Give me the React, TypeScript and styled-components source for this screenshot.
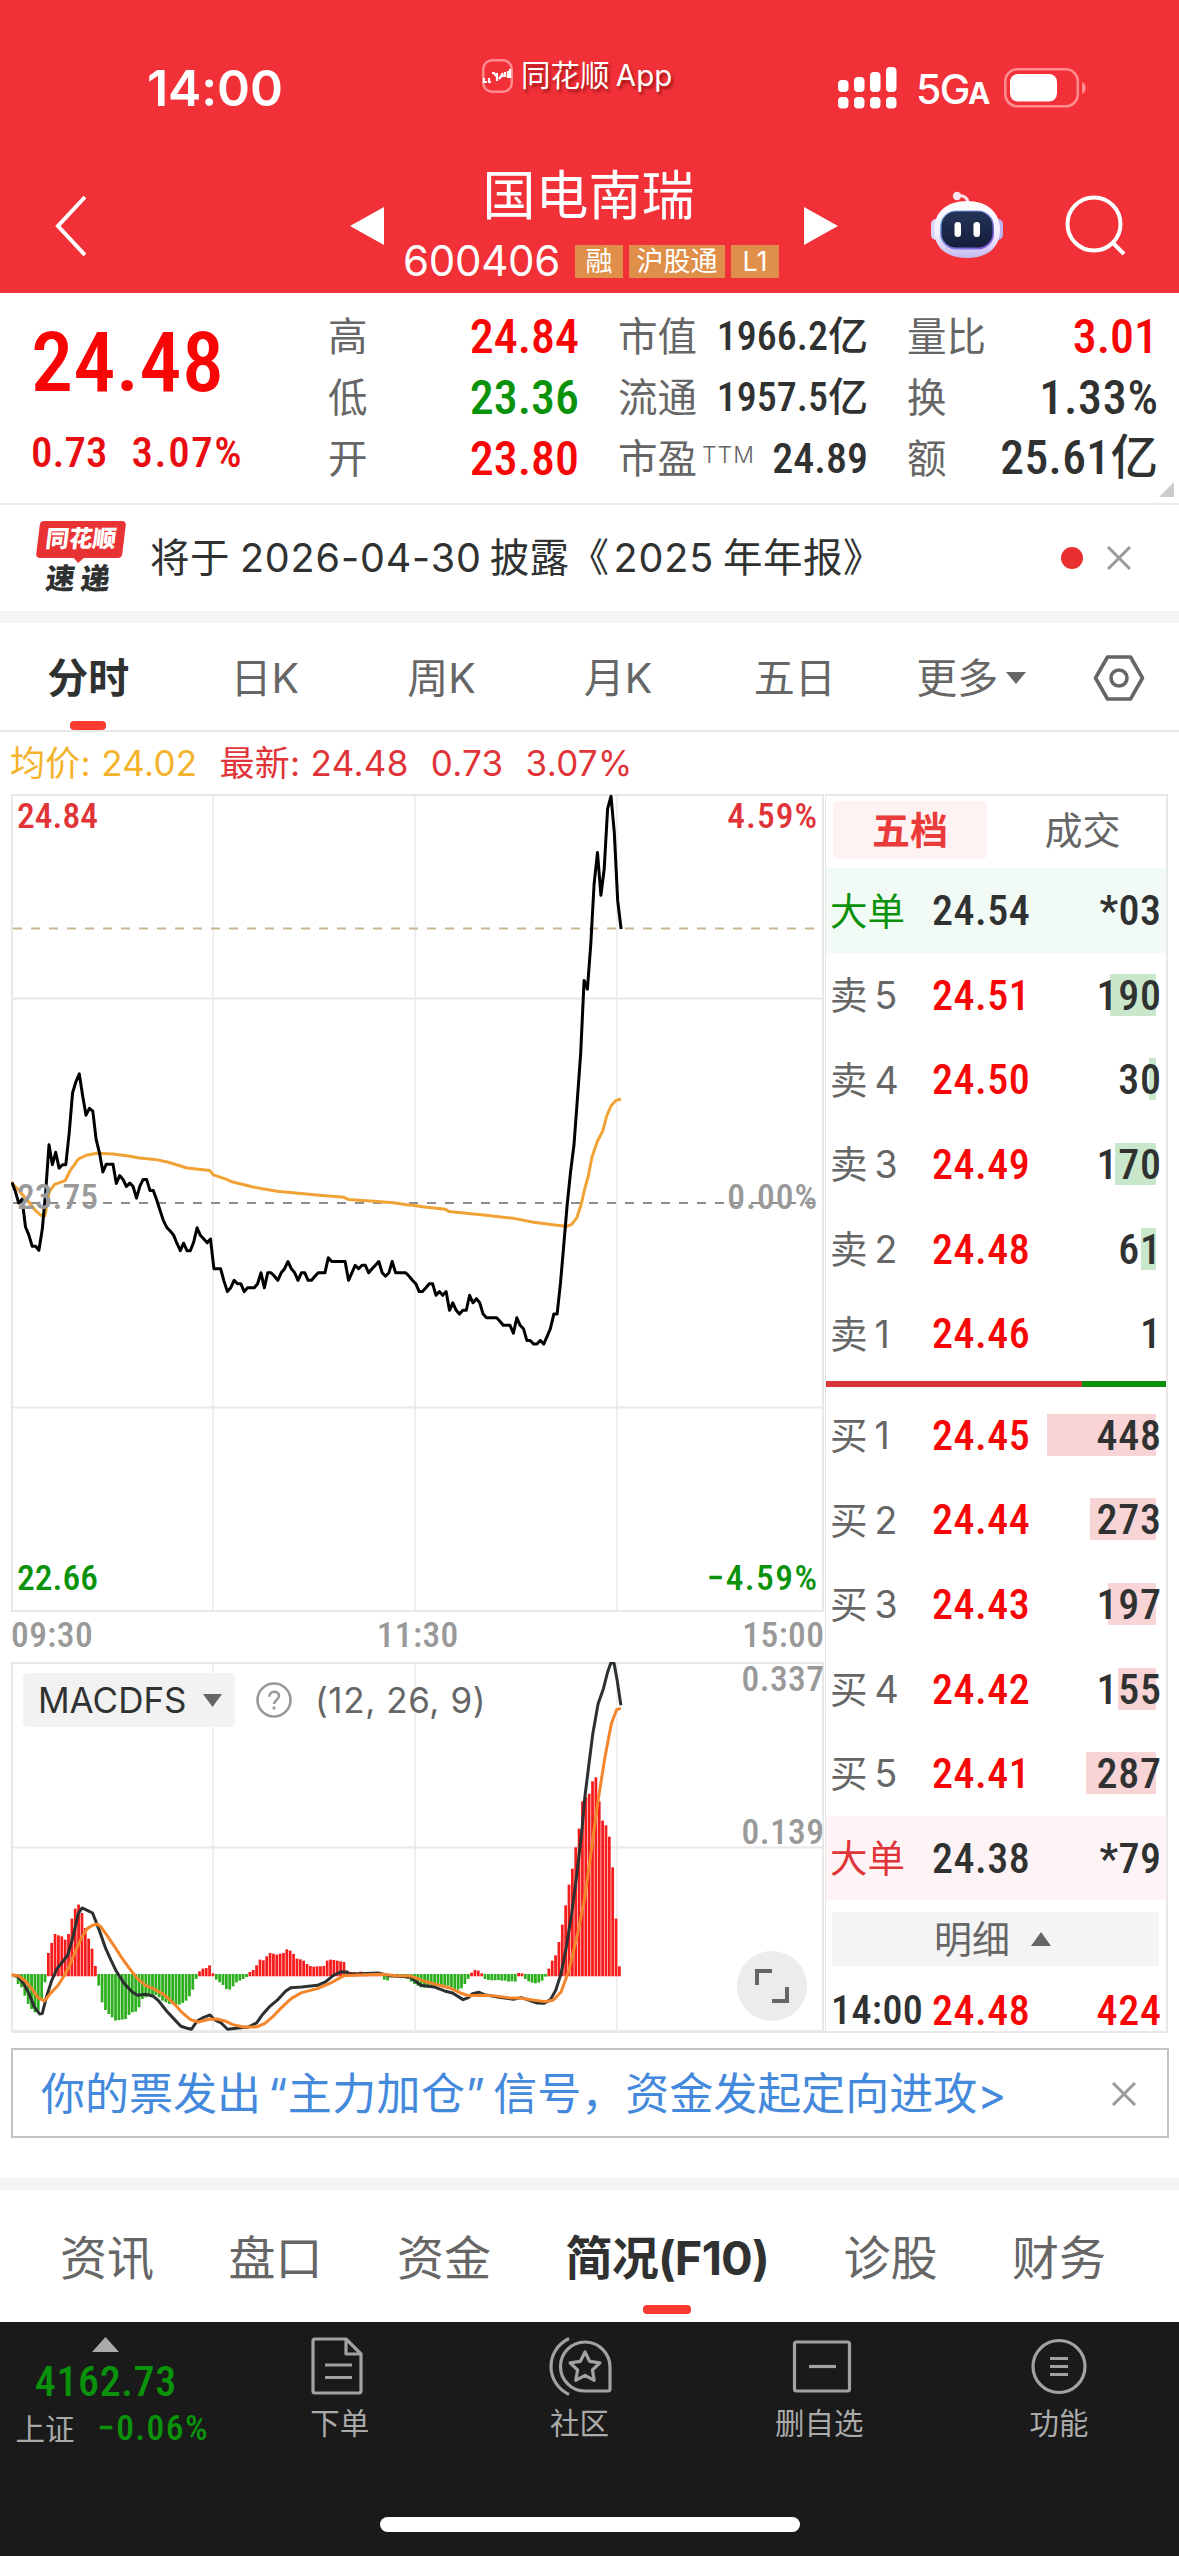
import React from 'react';
import styled, { createGlobalStyle, css } from 'styled-components';

const RED = '#f80505';
const GREEN = '#0a930a';
const INK = '#303232';
const GREY = '#666';
const LINE = '#e8e8e8';

const sans = `Inter, "Noto Sans CJK SC", sans-serif`;
const din = `"Roboto Condensed", Roboto, "Noto Sans CJK SC", sans-serif`;

const GlobalStyle = createGlobalStyle`
  * { box-sizing: border-box; }
  body { margin: 0; background: #fff; font-family: ${sans}; line-height: 1; color: ${INK}; }
`;

const Screen = styled.main`
  width: 1179px;
  height: 2556px;
  display: flex;
  flex-direction: column;
  overflow: hidden;
  background: #fff;
  white-space: nowrap;
`;

const Num = styled.span<{ $size: number; $color?: string; $track?: number; $weight?: number }>`
  font-family: ${din};
  font-weight: ${p => p.$weight ?? 500};
  font-size: ${p => p.$size}px;
  line-height: 1;
  letter-spacing: ${p => p.$track ?? 0}px;
  margin-right: ${p => -(p.$track ?? 0)}px;
  color: ${p => p.$color ?? INK};
`;

/* ---------- header ---------- */

const Header = styled.header`
  height: 293px;
  background: #f13037;
  color: #fff;
`;

const StatusBar = styled.div`
  height: 159px;
  padding: 17px 92px 0 147px;
  display: flex;
  align-items: center;
`;

const Clock = styled.div`
  width: 336px;
  font-size: 50px;
  font-weight: 600;
  letter-spacing: -0.1px;
`;

const AppChip = styled.div`
  width: 357px;
  display: flex;
  align-items: center;
  gap: 8px;
  margin-bottom: 24px;
  font-size: 29.5px;
  word-spacing: -2px;
  text-shadow: 2px 3px 3px rgba(90, 0, 0, 0.55);
`;

const StatusRight = styled.div`
  display: flex;
  align-items: center;
`;

const Network = styled.div`
  width: 68px;
  margin: 3px 20px 0 19px;
  display: flex;
  align-items: baseline;
  font-size: 41px;
  font-weight: 500;
  line-height: 1;
  letter-spacing: -1.5px;
  small { font-size: 30px; font-weight: 700; letter-spacing: 0; margin-left: -1px; }
`;

const TitleBar = styled.div`
  height: 134px;
  padding-left: 54px;
  display: flex;
  align-items: center;
`;

const IconSlot = styled.span<{ $gap: number }>`
  display: flex;
  margin-left: ${p => p.$gap}px;
`;

const TitleBlock = styled.div`
  width: 380px;
  height: 134px;
  margin: 0 23px 0 17px;
  display: flex;
  flex-direction: column;
`;

const StockName = styled.h1`
  height: 68px;
  margin: 3px 5px 0 0;
  font-size: 53px;
  line-height: 68px;
  font-weight: 400;
  text-align: center;
`;

const CodeRow = styled.div`
  height: 62px;
  display: flex;
  align-items: center;
  justify-content: center;
  gap: 6px;
`;

const Code = styled.span`
  margin-right: 9px;
  font-size: 42px;
  line-height: 1;
  letter-spacing: -0.3px;
`;

const Tag = styled.span<{ $w: number }>`
  width: ${p => p.$w}px;
  height: 33px;
  background: #e08f4a;
  font-size: 27px;
  line-height: 33px;
  text-align: center;
`;

/* ---------- quote ---------- */

const Quote = styled.section`
  position: relative;
  height: 212px;
  padding: 13px 0 0 31px;
  display: grid;
  grid-template-columns: 258px 251px 250px 251px;
  column-gap: 39px;
  border-bottom: 2px solid #ececec;
`;

const PriceBlock = styled.div`
  display: flex;
  flex-direction: column;
`;

const BigPrice = styled.div`
  height: 110px;
  display: flex;
  align-items: center;
  padding-top: 3px;
`;

const Change = styled.div`
  height: 72px;
  padding-top: 1px;
  display: flex;
  align-items: center;
  gap: 24px;
`;

const Facts = styled.dl`
  margin: 0;
  display: grid;
  grid-template-rows: repeat(3, 61px);
`;

const Fact = styled.div`
  display: flex;
  align-items: center;
  justify-content: space-between;
`;

const FactLabel = styled.dt`
  padding-top: 2px;
  font-size: 39.5px;
  line-height: 1;
  color: ${GREY};
  sup {
    margin-left: 5px;
    font-size: 23px;
    line-height: 1;
    vertical-align: 10px;
    font-weight: 300;
    letter-spacing: 1px;
  }
`;

const FactValue = styled.dd`
  margin: 0;
  display: flex;
  align-items: baseline;
`;

const Corner = styled.i`
  position: absolute;
  right: 5px;
  bottom: 6px;
  border-left: 15px solid transparent;
  border-bottom: 15px solid #ccc;
`;

/* ---------- notice ---------- */

const Notice = styled.section`
  height: 106px;
  padding: 0 48px 0 36px;
  display: flex;
  align-items: center;
`;

const Brand = styled.div`
  width: 90px;
  height: 76px;
  margin: 1px 24px 0 0;
  display: flex;
  flex-direction: column;
  align-items: center;
  font-weight: 900;
`;

const Bubble = styled.span`
  position: relative;
  width: 86px;
  height: 37px;
  border-radius: 4px;
  transform: skewX(-7deg);
  background: #e93234;
  color: #fff;
  font-size: 23.5px;
  line-height: 36px;
  text-align: center;
  &::after {
    content: '';
    position: absolute;
    left: 37px;
    top: 36px;
    border: 6px solid transparent;
    border-top-color: #e93234;
    border-bottom: 0;
  }
`;

const Express = styled.span`
  margin: 5px 0 0 0;
  font-size: 29px;
  line-height: 32px;
  letter-spacing: 6px;
  transform: skewX(-7deg);
`;

const NoticeText = styled.p`
  flex: 1;
  margin: 0;
  padding-top: 1px;
  font-size: 39.5px;
  letter-spacing: 0.45px;
  b { font-weight: 400; margin: 0 8px 0 10px; letter-spacing: 0.85px; }
  b.tight { margin: 0 9px 0 4px; }
`;

const Dot = styled.i`
  width: 22px;
  height: 22px;
  margin-right: 24px;
  border-radius: 50%;
  background: #e93030;
`;

const Band = styled.div`
  height: 12px;
  background: #f4f4f4;
`;

/* ---------- period tabs ---------- */

const PeriodTabs = styled.nav`
  height: 109px;
  display: grid;
  grid-template-columns: repeat(6, 176.6px) 1fr;
  border-bottom: 2px solid ${LINE};
`;

const activeMark = css<{ $bar: number }>`
  &::after {
    content: '';
    position: absolute;
    left: calc(50% - ${p => p.$bar / 2}px);
    width: ${p => p.$bar}px;
    height: 9px;
    border-radius: 4px;
    background: #f93a30;
    bottom: 0;
  }
`;

const Period = styled.a<{ $active?: boolean; $bar: number }>`
  position: relative;
  display: flex;
  align-items: center;
  justify-content: center;
  gap: 8px;
  padding-top: 3px;
  font-size: 41px;
  font-weight: ${p => (p.$active ? 700 : 400)};
  color: ${p => (p.$active ? INK : GREY)};
  ${p => p.$active && activeMark}
`;

const Legend = styled.div`
  height: 62px;
  padding-left: 10px;
  display: flex;
  align-items: center;
  gap: 22px;
  font-size: 35px;
  letter-spacing: 0.3px;
  color: #e03438;
`;

const Average = styled.span`color: #f4b32c;`;

/* ---------- chart ---------- */

const Market = styled.section`
  height: 1239px;
  padding-left: 11px;
  display: flex;
`;

const Charts = styled.div`
  width: 814px;
  border-bottom: 2px solid ${LINE};
`;

const PricePlot = styled.div`
  position: relative;
  width: 813px;
  height: 818px;
`;

const Plot = styled.svg`
  display: block;
`;

const AxisLayer = styled.div`
  position: absolute;
  inset: 0;
  padding: 4px 7px 14px 6px;
  display: flex;
  flex-direction: column;
  justify-content: space-between;
`;

const AxisRow = styled.div`
  height: 38px;
  display: flex;
  justify-content: space-between;
  align-items: center;
`;

const Times = styled.div`
  height: 50px;
  padding-bottom: 3px;
  width: 813px;
  display: grid;
  grid-template-columns: 1fr 1fr 1fr;
  align-items: center;
  & > :nth-child(2) { text-align: center; }
  & > :nth-child(3) { text-align: right; }
`;

const MacdPlot = styled.div`
  position: relative;
  width: 813px;
  height: 370px;
`;

const MacdBar = styled.div`
  position: absolute;
  left: 12px;
  top: 11px;
  display: flex;
  align-items: center;
  font-size: 35px;
  letter-spacing: 0.6px;
  color: ${GREY};
`;

const Picker = styled.button`
  width: 212px;
  height: 54px;
  margin-right: 21px;
  padding: 0 13px 0 15px;
  display: flex;
  align-items: center;
  justify-content: space-between;
  border: 0;
  border-radius: 5px;
  background: #f2f2f2;
  font: 400 35px ${sans};
  letter-spacing: 0;
  color: ${INK};
`;

const Params = styled.span`margin-left: 23px;`;

const Scale = styled.div<{ $top: number }>`
  position: absolute;
  right: 0;
  top: ${p => p.$top}px;
`;

const Expand = styled.button`
  position: absolute;
  right: 17px;
  bottom: 11px;
  width: 70px;
  height: 70px;
  padding: 0;
  display: grid;
  place-items: center;
  border: 0;
  border-radius: 50%;
  background: #ececec;
`;

/* ---------- order book ---------- */

const Book = styled.aside`
  width: 343px;
  display: flex;
  flex-direction: column;
  border: 2px solid ${LINE};
  border-width: 2px 2px 2px 1px;
`;

const BookTabs = styled.div`
  height: 72px;
  padding: 5px 0 9px 7px;
  display: flex;
`;

const BookTab = styled.button<{ $active?: boolean }>`
  flex: none;
  width: ${p => (p.$active ? 154 : 179)}px;
  padding: 0 0 0 ${p => (p.$active ? 0 : 12)}px;
  border: 0;
  border-radius: 5px;
  background: ${p => (p.$active ? '#fff2f2' : 'transparent')};
  color: ${p => (p.$active ? '#e93c3a' : GREY)};
  font: ${p => (p.$active ? 700 : 400)} 38px/1 ${sans};
`;

const Order = styled.div<{ $bg?: string }>`
  height: 84.6px;
  padding: 2px 5px 0 5px;
  display: grid;
  grid-template-columns: 101px 110px 1fr;
  align-items: center;
  background: ${p => p.$bg ?? 'transparent'};
`;

const Level = styled.span<{ $color?: string }>`
  display: flex;
  align-items: baseline;
  gap: 7px;
  margin-left: -1px;
  font-size: 37.5px;
  color: ${p => p.$color ?? GREY};
`;

const Volume = styled.div`
  position: relative;
  height: 42px;
  display: flex;
  align-items: center;
  justify-content: flex-end;
  span { position: relative; }
`;

const VolumeBar = styled.i<{ $side: 'sell' | 'buy' }>`
  position: absolute;
  right: 5px;
  top: -1px;
  height: 42px;
  background: ${p => (p.$side === 'sell' ? '#c9e7cb' : '#f9d4d6')};
`;

const Ratio = styled.div`
  height: 6px;
  margin: 5px 0 6px;
  display: flex;
  background: #0d910d;
  &::before { content: ''; width: 75.2%; background: #da3434; }
`;

const Details = styled.button`
  height: 54px;
  margin: 12px 7px 0 6px;
  padding-right: 12px;
  display: flex;
  align-items: center;
  justify-content: center;
  gap: 21px;
  border: 0;
  background: #f4f4f4;
  font: 400 38px/1 ${sans};
  color: ${GREY};
`;

const LastTrade = styled(Order)`
  height: 64px;
  padding-top: 24px;
`;

/* ---------- banner and section tabs ---------- */

const Banner = styled.div`
  height: 90px;
  margin: 15px 10px 40px 11px;
  padding: 1px 31px 0 28px;
  display: flex;
  align-items: center;
  justify-content: space-between;
  border: 2px solid #c4c4c4;
  font-size: 44px;
  color: #4489dc;
  q { quotes: none; margin: 0 8px 0 7px; letter-spacing: 0.4px; }
`;

const SectionTabs = styled.nav`
  height: 132px;
  padding: 0 73px 0 60px;
  display: flex;
  justify-content: space-between;
`;

const Section = styled.a<{ $active?: boolean; $bar: number }>`
  position: relative;
  height: 124px;
  padding-top: 10px;
  display: flex;
  align-items: center;
  font-size: 47px;
  letter-spacing: ${p => (p.$active ? -0.8 : 0)}px;
  font-weight: ${p => (p.$active ? 700 : 400)};
  color: ${p => (p.$active ? INK : GREY)};
  ${p => p.$active && activeMark}
`;

/* ---------- bottom bar ---------- */

const BottomBar = styled.footer`
  height: 234px;
  display: flex;
  flex-direction: column;
  align-items: center;
  background: #1a1a1a;
  color: #aaa;
  font-size: 29.5px;
`;

const BottomRow = styled.div`
  width: 100%;
  height: 195px;
  padding-top: 14px;
  display: grid;
  grid-template-columns: 220px repeat(4, 1fr);
`;

const IndexBlock = styled.div`
  display: flex;
  flex-direction: column;
  align-items: center;
  padding: 1px 9px 0 0;
`;

const IndexValue = styled.div`
  height: 59px;
  display: flex;
  align-items: center;
`;

const IndexChange = styled.div`
  width: 192px;
  margin-left: 12px;
  display: flex;
  align-items: center;
  justify-content: space-between;
  line-height: 36px;
`;

const Action = styled.a<{ $shift?: number }>`
  display: flex;
  flex-direction: column;
  align-items: center;
  line-height: 48px;
  svg { height: 62px; margin: 0 0 1px ${p => p.$shift ?? 0}px; }
`;

const HomeIndicator = styled.div`
  width: 420px;
  height: 15px;
  border-radius: 8px;
  background: #fff;
`;

/* ---------- icons ---------- */

const AppGlyph = () => (
  <svg width="31" height="34" viewBox="0 0 31 34" fill="none">
    <rect x="1.2" y="1.2" width="28.6" height="31.6" rx="9" stroke="#ff8d90" strokeWidth="2.4" />
    <path d="M2 19v4h3m2-4v4h2M10 14h2l2 3M15 14v8M17 20l3-4M20 14l1 4M23 13v5M26 12v6h2v-8" stroke="#fff" strokeWidth="2.2" />
  </svg>
);

const Signal = () => (
  <svg width="59" height="42" viewBox="0 0 59 42" fill="#fff">
    {[13, 10, 5, 0].map((y, i) => (
      <g key={y}>
        <rect x={i * 16} y={y} width="10.5" height={25 - y} rx="4" />
        <rect x={i * 16} y="30" width="10.5" height="11.5" rx="4" />
      </g>
    ))}
  </svg>
);

const Battery = () => (
  <svg width="83" height="40" viewBox="0 0 83 40">
    <rect x="1.3" y="1.3" width="72.5" height="37" rx="12" fill="none" stroke="#ff8b8f" strokeWidth="2.6" />
    <rect x="6" y="6" width="47" height="27.5" rx="8" fill="#fff" />
    <path d="M78 14c5 2 5 10 0 12z" fill="#ff8b8f" />
  </svg>
);

const Chevron = () => (
  <svg width="32" height="62" viewBox="0 0 32 62" fill="none" stroke="#fff" strokeWidth="4">
    <path d="M31 2 4 31l27 29" />
  </svg>
);

const Arrow = ({ flip }: { flip?: boolean }) => (
  <svg width="34" height="40" viewBox="0 0 34 40" fill="#fff">
    <path d={flip ? 'M0 1v38l34-19z' : 'M34 1v38L0 20z'} />
  </svg>
);

const Robot = () => (
  <svg width="72" height="70" viewBox="0 0 72 70">
    <defs>
      <linearGradient id="shell" x1="0" y1="0" x2="0" y2="1">
        <stop offset="0" stopColor="#fff" />
        <stop offset=".6" stopColor="#f1ecff" />
        <stop offset="1" stopColor="#c3b8ee" />
      </linearGradient>
      <linearGradient id="rim" x1="0" y1="0" x2="1" y2="1">
        <stop offset="0" stopColor="#7fb7ea" />
        <stop offset="1" stopColor="#7a4fd6" />
      </linearGradient>
      <linearGradient id="face" x1="0" y1="0" x2="0" y2="1">
        <stop offset="0" stopColor="#243457" />
        <stop offset="1" stopColor="#151d3c" />
      </linearGradient>
    </defs>
    <path d="M26 5c6-1 11 1 11 8" fill="none" stroke="#f6dfe6" strokeWidth="3.2" />
    <circle cx="26" cy="5" r="4.2" fill="#f7e6ee" />
    <rect x="0" y="28" width="10" height="21" rx="5" fill="#d9d3f5" />
    <rect x="62" y="28" width="10" height="21" rx="5" fill="#bdb0ef" />
    <path d="M36 10c20 0 33 11 33 29S56 67 36 67 3 57 3 39s13-29 33-29z" fill="url(#shell)" />
    <rect x="9" y="19.500" width="54" height="39" rx="16" fill="url(#rim)" />
    <rect x="10.500" y="20.500" width="51" height="36" rx="14.5" fill="url(#face)" />
    <rect x="23.500" y="31" width="6.5" height="15" rx="3.2" fill="#fff" />
    <rect x="42.500" y="31" width="6.5" height="15" rx="3.2" fill="#fff" />
  </svg>
);

const Search = () => (
  <svg width="62" height="62" viewBox="0 0 62 62" fill="none" stroke="#fff" strokeWidth="4">
    <circle cx="29" cy="29" r="26.500" />
    <path d="m48 48 11 11" />
  </svg>
);

const Cross = () => (
  <svg width="24" height="24" viewBox="0 0 24 24" stroke="#999" strokeWidth="3">
    <path d="m1 1 22 22M23 1 1 23" />
  </svg>
);

const Triangle = ({ w, h, up, color }: { w: number; h: number; up?: boolean; color: string }) => (
  <svg width={w} height={h} fill={color}>
    <path d={up ? `M0 ${h}h${w}L${w / 2} 0z` : `M0 0h${w}L${w / 2} ${h}z`} />
  </svg>
);

const Hexagon = () => (
  <svg width="52" height="48" viewBox="0 0 52 48" fill="none" stroke="#666" strokeWidth="3.6" strokeLinejoin="round">
    <path d="M14.500 3h23L49.500 24l-12 21h-23L2.500 24z" />
    <circle cx="26" cy="24" r="8" />
  </svg>
);

const Help = () => (
  <svg width="36" height="36" viewBox="0 0 36 36" fill="none" stroke="#999" strokeWidth="2.6">
    <circle cx="18" cy="18" r="16.500" />
    <path d="M13.200 14.800c0-6.600 9.800-6.400 9.800-.8 0 3.600-5 3.800-5 8M18 24.500v3" />
  </svg>
);

const Corners = () => (
  <svg width="38" height="38" viewBox="0 0 38 38" fill="none" stroke="#666" strokeWidth="4">
    <path d="M4 18V4h15M34 20v14H19" />
  </svg>
);

const DocIcon = () => (
  <svg width="54" viewBox="0 0 54 62" fill="none" stroke="#a2a2a2" strokeWidth="3.200" strokeLinejoin="round">
    <path d="M36 3H5q-2 0-2 2v50q0 2 2 2h44q2 0 2-2V18zv15h15M15 29h27M15 41.500h27" />
  </svg>
);

const CommunityIcon = () => (
  <svg width="64" viewBox="0 0 64 62" fill="none" stroke="#a2a2a2" strokeWidth="3.200" strokeLinejoin="round">
    <path d="M21 2.500C-3 14-3 47 21 58.500" />
    <path d="M37 6a24.500 24.500 0 1 0 0 49h23q2 0 2-2V31A25 25 0 0 0 37 6z" />
    <path d="m37 16 4.600 9.300 10.300 1.500-7.500 7.200 1.800 10.300L37 39.400l-9.200 4.900L29.600 34l-7.500-7.200 10.300-1.500z" />
  </svg>
);

const RemoveIcon = () => (
  <svg width="60" viewBox="0 0 60 62" fill="none" stroke="#a2a2a2" strokeWidth="3.200">
    <rect x="2.500" y="6" width="55" height="49" rx="2" />
    <path d="M17 30.500h27" />
  </svg>
);

const MenuIcon = () => (
  <svg width="58" viewBox="0 0 58 62" fill="none" stroke="#a2a2a2" strokeWidth="3.200">
    <circle cx="29" cy="30.500" r="26" />
    <path d="M20 22.500h18M20 30.500h18M20 38.500h18" />
  </svg>
);

/* ---------- data ---------- */

/* one value a minute: distance from yesterday's close, in cents */
const minutes = [
  5.5, 3, 0, 1, -6.4, -8.5, -11.5, -11.5, -12.6, -7, 3, 15.5, 10.2, 13.5, 9.3, 10.2, 10.2, 18.7, 29.4, 32.3, 34.4, 28.5, 23.4, 25.2, 24.5,
  17, 13.3, 8.3, 10.3, 10.3, 10.3, 5.2, 7.3, 6.3, 4.4, 5.3, 4.4, 1.3, 4.5, 6.3, 6.3, 3.3, 3.3, 0.8, -2, -4.7, -6.5, -7.5, -8.5, -10.7,
  -12.7, -10.7, -12.7, -12.7, -10.4, -6.6, -8.6, -9.6, -10.6, -9.6, -17.5, -17.5, -17.5, -20.8, -23.6, -22.6, -20.6, -21.5, -21.5, -23.6,
  -22.6, -22.6, -22.6, -21.5, -18.6, -22.6, -18.6, -18.6, -19.5, -20.6, -18.6, -17.5, -15.6, -17.5, -18.6, -20.6, -18.6, -18.6, -20.6,
  -20.6, -19.5, -18.6, -18.6, -18.6, -14.6, -15.6, -15.6, -15.6, -15.6, -15.6, -20.6, -18.6, -16.6, -17.5, -16.6, -16.6, -18.6, -17.5,
  -16.6, -15.6, -18.6, -19.5, -18.6, -15.6, -18.6, -18.6, -18.6, -18.6, -19.5, -20.6, -21.5, -23.6, -23.6, -22.6, -21.5, -21.5, -24.6,
  -23.6, -24.6, -23.6, -28.6, -26.6, -28.6, -29.6, -28.6, -28.6, -24.6, -26.6, -25.5, -26.6, -29.6, -30.6, -30.6, -30.6, -30.6, -31.5,
  -32.6, -32.6, -32.6, -34.7, -30.6, -32.6, -33.5, -36.6, -36.6, -37.6, -37.6, -36.6, -37.6, -35.6, -33.5, -29.6, -29.6, -21.3, -10.8,
  -0.4, 8.4, 15.5, 27.4, 40, 59.3, 57, 69, 85, 93.4, 82, 89, 105, 108.4, 98.7, 80.5, 73,
];

const priceLine = minutes.map((c, i) => `${(1 + i * 3.365).toFixed(1)},${(409 - c * 3.753).toFixed(1)}`).join(' ');

const averageLine =
  '0,388 14.5,404 24,416 30.3,421.7 34,421.7 38.3,397.6 43.6,390.3 54.2,386.6 59.5,376 67.4,365 75.3,361.3 86,359.3 102,360 117.7,362 128.3,364 144,365.4 157.4,368.2 176,374 198.7,376.4 202.4,380.9 215.6,385.4 221,387.8 242,393 266,397.2 284.5,398.9 305.6,400.9 333,403.3 337.4,405.4 366.5,407.4 382.4,408.7 395.6,410.7 403.6,411.5 411.5,412.7 434.3,415.2 438,417.6 475,421.3 504,424.6 522.7,428.2 543.9,431.1 555.5,432.3 560.8,430.3 566,423.3 570.3,409.9 573.5,395.6 577.2,382.5 581,363 586.2,347.8 592,336.4 595.7,322 600,312 604.7,306.6 610,305';

const histogram = [
  -5, -25, -35, -60, -85, -100, -110, -105, -70, -20, 65, 95, 122, 118, 115, 105, 122, 168, 198, 210, 185, 140, 108, 78, 26,
  -30, -80, -103, -115, -125, -135, -133, -132, -130, -118, -110, -108, -95, -70, -65, -60, -60, -58, -65, -75, -80, -85, -85, -87, -87, -82, -75, -62, -42, -10,
  10, 18, 20, 28, 4, -12, -20, -28, -40, -42, -32, -20, -15, -10, -4,
  8, 14, 28, 45, 43, 55, 65, 63, 60, 63, 65, 76, 72, 62, 48, 46, 42, 32, 26, 24, 25, 25, 26, 42, 45, 44, 42, 40, 38,
  12, 8, 8, 6, 9, 5, 5, 6, 8, 5, 4, -12, -14, -5, -3, -3, -4, -6,
  -10, -18, -25, -30, -35, -36, -36, -35, -33, -30, -33, -35, -30, -35, -40, -42, -38, -25, -10, 6, 14, 12, 4,
  -10, -13, -14, -14, -13, -15, -15, -18, -17, -18, 5, 4, -10, -17, -21, -23, -21, -15, -3,
  18, 42, 58, 98, 150, 208, 270, 318, 382, 438, 520, 532, 543, 580, 592, 520, 462, 448, 414, 322, 168, 25,
];

const difLine =
  '25,1004 35,1010 45,1030 55,1060 65,1100 75,1121 80,1120 88,1070 98,1020 108,985 118,965 128,945 138,890 148,820 155,803 165,810 175,818 183,850 190,880 200,925 210,960 220,993 235,1030 250,1055 260,1065 275,1062 290,1068 300,1082 315,1112 330,1138 342,1158 352,1163 362,1167 372,1143 385,1131 397,1124 405,1138 418,1148 430,1167 450,1163 470,1160 485,1148 495,1125 510,1098 525,1078 540,1052 550,1042 570,1040 600,1035 615,1025 630,1005 645,994 655,995 660,1001 680,1000 715,998 735,1006 775,1010 795,1035 820,1040 840,1052 855,1058 875,1078 885,1072 893,1060 905,1056 915,1063 940,1070 970,1077 985,1072 1000,1080 1015,1088 1028,1089 1040,1078 1050,1050 1060,1000 1070,920 1080,820 1090,700 1100,560 1105,470 1112,380 1120,280 1130,190 1140,145 1148,95 1154,68 1160,68 1166,120 1173,195';

const deaLine =
  '22,1004 35,1006 48,1022 60,1045 72,1072 84,1082 95,1060 110,1035 122,1005 132,975 145,925 155,890 165,865 175,855 183,851 190,858 200,880 215,915 230,952 245,985 260,1015 275,1035 290,1045 310,1063 330,1092 345,1118 360,1138 375,1145 395,1137 410,1136 425,1142 440,1153 460,1160 485,1160 500,1150 515,1130 530,1105 550,1075 570,1057 600,1045 625,1028 650,1006 680,1004 720,1002 750,1006 775,1007 800,1022 830,1035 850,1043 870,1058 885,1066 905,1065 930,1066 960,1072 985,1074 1010,1080 1030,1084 1045,1080 1060,1055 1075,990 1090,890 1105,770 1118,620 1130,480 1143,350 1155,250 1165,208 1173,204';

const sells: [number, string, number][] = [[5, '24.51', 190], [4, '24.50', 30], [3, '24.49', 170], [2, '24.48', 61], [1, '24.46', 1]];
const buys: [number, string, number][] = [[1, '24.45', 448], [2, '24.44', 273], [3, '24.43', 197], [4, '24.42', 155], [5, '24.41', 287]];

const columns = [202, 404, 606];

/* ---------- parts ---------- */

function OrderRow({ side, level, price, volume }: { side: 'sell' | 'buy'; level: number; price: string; volume: number }) {
  return (
    <Order>
      <Level><span>{side === 'sell' ? '卖' : '买'}</span><span>{level}</span></Level>
      <Num $size={42} $track={0.5} $color={RED}>{price}</Num>
      <Volume>
        {volume > 10 && <VolumeBar $side={side} style={{ width: Math.round(volume * 0.2435) }} />}
        <Num $size={42} $track={0.8}>{volume}</Num>
      </Volume>
    </Order>
  );
}

function BigOrder({ color, bg, price, volume }: { color: string; bg: string; price: string; volume: string }) {
  return (
    <Order $bg={bg}>
      <Level $color={color}>大单</Level>
      <Num $size={42} $track={0.5}>{price}</Num>
      <Volume><Num $size={42} $track={0.5}>{volume}</Num></Volume>
    </Order>
  );
}

function PriceChart() {
  return (
    <PricePlot>
      <Plot width="813" height="818" viewBox="0 0 813 818" fill="none">
        <g stroke={LINE} strokeWidth="2">
          <path d="M1 1h811v816H1zM1 204.500h811M1 613.500h811" />
          <path d={columns.map(x => `M${x} 1v816`).join('')} strokeWidth="1.400" />
        </g>
        <path d="M2 134.500h810" stroke="#c9b592" strokeWidth="1.800" strokeDasharray="9 9" />
        <path d="M2 409h810" stroke="#8d8d8d" strokeWidth="2" strokeDasharray="9 9" />
        <polyline points={averageLine} stroke="#f0a334" strokeWidth="3" strokeLinejoin="round" />
        <polyline points={priceLine} stroke="#000" strokeWidth="3" strokeLinejoin="round" />
      </Plot>
      <AxisLayer>
        <AxisRow><Num $size={35.5} $color="#e03438">24.84</Num><Num $size={35.5} $track={1} $color="#e03438">4.59%</Num></AxisRow>
        <AxisRow><Num $size={35.5} $color="#999">23.75</Num><Num $size={35.5} $track={1} $color="#999">0.00%</Num></AxisRow>
        <AxisRow><Num $size={35.5} $color={GREEN}>22.66</Num><Num $size={35.5} $track={1.4} $color={GREEN}>−4.59%</Num></AxisRow>
      </AxisLayer>
    </PricePlot>
  );
}

function MacdChart() {
  return (
    <MacdPlot>
      <Plot width="813" height="370" viewBox="0 0 813 370" fill="none">
        <g stroke={LINE} strokeWidth="2">
          <path d="M1 1h811v368H1zM1 185.500h811" />
          <path d={columns.map(x => `M${x} 1v368`).join('')} strokeWidth="1.400" />
        </g>
        <g transform="scale(.5294 .3333) translate(-21 -65)">
          {histogram.map((v, i) => (
            <rect key={i} x={25.5 + i * 6.345} width="5.200" y={v > 0 ? 1003 - v : 1001} height={Math.abs(v) + 5} fill={v > 0 ? '#f61c1c' : '#2cae1e'} />
          ))}
          <g strokeWidth="3" strokeLinejoin="round">
            <polyline points={difLine} stroke="#2d3030" vectorEffect="non-scaling-stroke" />
            <polyline points={deaLine} stroke="#f5852b" vectorEffect="non-scaling-stroke" />
          </g>
        </g>
      </Plot>
      <MacdBar>
        <Picker>MACDFS<Triangle w={19} h={13} color="#666" /></Picker>
        <Help />
        <Params>(12, 26, 9)</Params>
      </MacdBar>
      <Scale $top={0}><Num $size={35.5} $color="#999" $track={0.4}>0.337</Num></Scale>
      <Scale $top={153}><Num $size={35.5} $color="#999" $track={0.4}>0.139</Num></Scale>
      <Expand><Corners /></Expand>
    </MacdPlot>
  );
}

export default function App() {
  return (
    <Screen>
      <GlobalStyle />
      <Header>
        <StatusBar>
          <Clock>14:00</Clock>
          <AppChip><AppGlyph />同花顺 App</AppChip>
          <StatusRight>
            <Signal />
            <Network>5G<small>A</small></Network>
            <Battery />
          </StatusRight>
        </StatusBar>
        <TitleBar>
          <Chevron />
          <IconSlot $gap={264}><Arrow /></IconSlot>
          <TitleBlock>
            <StockName>国电南瑞</StockName>
            <CodeRow>
              <Code>600406</Code>
              <Tag $w={48}>融</Tag>
              <Tag $w={96}>沪股通</Tag>
              <Tag $w={48}>L1</Tag>
            </CodeRow>
          </TitleBlock>
          <Arrow flip />
          <IconSlot $gap={93}><Robot /></IconSlot>
          <IconSlot $gap={62}><Search /></IconSlot>
        </TitleBar>
      </Header>

      <Quote>
        <PriceBlock>
          <BigPrice><Num $size={84} $color={RED} $track={0.4}>24.48</Num></BigPrice>
          <Change><Num $size={43} $color="#e80d10">0.73</Num><Num $size={43} $track={1.6} $color="#e80d10">3.07%</Num></Change>
        </PriceBlock>
        <Facts>
          <Fact><FactLabel>高</FactLabel><FactValue><Num $size={48} $color={RED}>24.84</Num></FactValue></Fact>
          <Fact><FactLabel>低</FactLabel><FactValue><Num $size={48} $color={GREEN}>23.36</Num></FactValue></Fact>
          <Fact><FactLabel>开</FactLabel><FactValue><Num $size={48} $color={RED}>23.80</Num></FactValue></Fact>
        </Facts>
        <Facts>
          <Fact><FactLabel>市值</FactLabel><FactValue><Num $size={40}>1966.2亿</Num></FactValue></Fact>
          <Fact><FactLabel>流通</FactLabel><FactValue><Num $size={40}>1957.5亿</Num></FactValue></Fact>
          <Fact><FactLabel>市盈<sup>TTM</sup></FactLabel><FactValue><Num $size={42}>24.89</Num></FactValue></Fact>
        </Facts>
        <Facts>
          <Fact><FactLabel>量比</FactLabel><FactValue><Num $size={48} $color={RED}>3.01</Num></FactValue></Fact>
          <Fact><FactLabel>换</FactLabel><FactValue><Num $size={48} $track={0.7}>1.33%</Num></FactValue></Fact>
          <Fact><FactLabel>额</FactLabel><FactValue><Num $size={47.5} $track={0.4}>25.61亿</Num></FactValue></Fact>
        </Facts>
        <Corner />
      </Quote>

      <Notice>
        <Brand><Bubble>同花顺</Bubble><Express>速递</Express></Brand>
        <NoticeText>将于<b>2026-04-30</b>披露《<b className="tight">2025</b>年年报》</NoticeText>
        <Dot />
        <Cross />
      </Notice>
      <Band />

      <PeriodTabs>
        <Period $active $bar={36}>分时</Period>
        <Period $bar={36}>日K</Period>
        <Period $bar={36}>周K</Period>
        <Period $bar={36}>月K</Period>
        <Period $bar={36}>五日</Period>
        <Period $bar={36}>更多<Triangle w={20} h={12} color="#666" /></Period>
        <Period $bar={36}><Hexagon /></Period>
      </PeriodTabs>
      <Legend>
        <Average>均价: 24.02</Average>
        <span>最新: 24.48</span>
        <span>0.73</span>
        <span>3.07%</span>
      </Legend>

      <Market>
        <Charts>
          <PriceChart />
          <Times>
            <Num $size={35.5} $color="#999" $track={0.4}>09:30</Num>
            <Num $size={35.5} $color="#999" $track={0.4}>11:30</Num>
            <Num $size={35.5} $color="#999" $track={0.4}>15:00</Num>
          </Times>
          <MacdChart />
        </Charts>
        <Book>
          <BookTabs><BookTab $active>五档</BookTab><BookTab>成交</BookTab></BookTabs>
          <BigOrder color={GREEN} bg="#f2faf6" price="24.54" volume="*03" />
          {sells.map(([n, p, v]) => <OrderRow key={n} side="sell" level={n} price={p} volume={v} />)}
          <Ratio />
          {buys.map(([n, p, v]) => <OrderRow key={n} side="buy" level={n} price={p} volume={v} />)}
          <BigOrder color="#e03438" bg="#fff4f5" price="24.38" volume="*79" />
          <Details>明细<Triangle w={20} h={14} up color="#666" /></Details>
          <LastTrade>
            <Num $size={40} $track={0.4}>14:00</Num>
            <Num $size={42} $track={0.5} $color={RED}>24.48</Num>
            <Volume><Num $size={42} $color={RED} $track={0.8}>424</Num></Volume>
          </LastTrade>
        </Book>
      </Market>

      <Banner>
        <span>你的票发出<q>“主力加仓”</q>信号，资金发起定向进攻&gt;</span>
        <Cross />
      </Banner>
      <Band />
      <SectionTabs>
        <Section $bar={48}>资讯</Section>
        <Section $bar={48}>盘口</Section>
        <Section $bar={48}>资金</Section>
        <Section $bar={48} $active>简况(F10)</Section>
        <Section $bar={48}>诊股</Section>
        <Section $bar={48}>财务</Section>
      </SectionTabs>

      <BottomBar>
        <BottomRow>
          <IndexBlock>
            <Triangle w={27} h={15} up color="#aaa" />
            <IndexValue><Num $size={42} $color={GREEN} $track={0.6}>4162.73</Num></IndexValue>
            <IndexChange>上证<Num $size={35.5} $track={1.4} $color={GREEN}>−0.06%</Num></IndexChange>
          </IndexBlock>
          <Action $shift={-5}><DocIcon />下单</Action>
          <Action><CommunityIcon />社区</Action>
          <Action $shift={6}><RemoveIcon />删自选</Action>
          <Action><MenuIcon />功能</Action>
        </BottomRow>
        <HomeIndicator />
      </BottomBar>
    </Screen>
  );
}
